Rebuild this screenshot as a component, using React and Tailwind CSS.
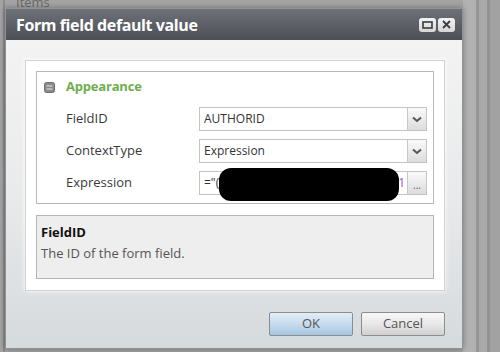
import React from 'react';

const font = "font-['Open_Sans',sans-serif]";

const Chevron = () => (
  <svg width="10" height="7" viewBox="0 0 10 7">
    <path d="M1 1.5 L5 5 L9 1.5" fill="none" stroke="#555" strokeWidth="2" />
  </svg>
);

const DropButton = ({ children }) => (
  <div className="w-[19px] h-full flex items-center justify-center border-l border-[#c8c8c8] bg-gradient-to-b from-[#fafafa] to-[#dcdcdc]">
    {children}
  </div>
);

const Row = ({ label, children }) => (
  <div className="flex items-center h-[32px]">
    <div className="w-[162px] pl-[29px] text-[13px] text-[#3a3a3a]">{label}</div>
    <div className="relative flex h-[24px] w-[228px] border border-[#c4c4c4] bg-white">{children}</div>
  </div>
);

const WinButton = ({ children }) => (
  <div className="w-[17px] h-[14px] rounded-[3px] bg-gradient-to-b from-[#f4f4f4] to-[#d6d6d6] flex items-center justify-center">
    {children}
  </div>
);

export default function App() {
  return (
    <div className={`relative w-[500px] h-[352px] overflow-hidden bg-[#a4a4a4] ${font}`}>
      <div className="absolute left-[16px] top-[-7px] text-[13px] text-[#6a6a6a]">Items</div>
      <div className="absolute left-[463px] top-0 h-full w-[37px] flex">
        <div className="w-[13px] bg-[#b2b2b2]" />
        <div className="w-[3px] bg-[#969696]" />
        <div className="w-[8px] bg-[#a9a9a9]" />
        <div className="w-[3px] bg-[#939393]" />
        <div className="flex-1 bg-[#a2a2a2]" />
      </div>
      <div className="absolute left-[3px] top-0 h-full w-[2px] bg-[#8c8c8c]" />

      <div className="absolute left-[5px] top-[8px] w-[458px] h-[341px] flex flex-col border border-[#8f9296] shadow-[0_0_6px_rgba(0,0,0,0.35)]">
        <div className="h-[31px] shrink-0 flex items-center justify-between pl-[10px] pr-[7px] bg-gradient-to-b from-[#6e7278] to-[#4c5056]">
          <span className="text-[16px] font-bold text-white tracking-[-0.4px]">Form field default value</span>
          <div className="flex gap-[2px]">
            <WinButton>
              <svg width="11" height="8" viewBox="0 0 11 8">
                <rect x="1" y="1" width="9" height="6" fill="none" stroke="#3c3c3c" strokeWidth="1.6" />
              </svg>
            </WinButton>
            <WinButton>
              <svg width="9" height="9" viewBox="0 0 9 9">
                <path d="M1 1 L8 8 M8 1 L1 8" stroke="#3c3c3c" strokeWidth="1.8" />
              </svg>
            </WinButton>
          </div>
        </div>

        <div className="flex-1 flex flex-col pl-[19px] pr-[17px] pt-[20px] bg-gradient-to-b from-[#f3f3f3] via-[#e9eaeb] to-[#d5dadd]">
          <div className="h-[231px] p-[10px] bg-white border border-[#d3d3d3] shadow-[0_0_5px_rgba(255,255,255,1)] flex flex-col gap-[11px]">
            <div className="h-[133px] border border-[#b9b9b9] bg-white pt-[6px]">
              <div className="flex items-center h-[18px]">
                <div className="w-[29px] pl-[7px]">
                  <svg width="11" height="11" viewBox="0 0 11 11">
                    <rect x="0.5" y="0.5" width="10" height="10" rx="2" fill="#8a8a8a" stroke="#6e6e6e" />
                    <path d="M2.5 4 H8.5 M2.5 7 H8.5" stroke="#e6e6e6" strokeWidth="1.2" />
                  </svg>
                </div>
                <span className="text-[13px] font-bold text-[#6fad4f] tracking-[-0.2px]">Appearance</span>
              </div>
              <div className="pt-[7px]">
                <Row label="FieldID">
                  <div className="flex-1 flex items-center pl-[4px] text-[12px] text-[#333]">AUTHORID</div>
                  <DropButton><Chevron /></DropButton>
                </Row>
                <Row label="ContextType">
                  <div className="flex-1 flex items-center pl-[4px] text-[12px] text-[#333]">Expression</div>
                  <DropButton><Chevron /></DropButton>
                </Row>
                <Row label="Expression">
                  <div className="flex-1 flex items-center justify-between pl-[4px] pr-[2px] text-[12px] text-[#333]">
                    <span>="(</span>
                    <span className="text-[#9b59c6]">1</span>
                  </div>
                  <DropButton>
                    <span className="text-[10px] leading-none text-[#555] pt-[4px]">...</span>
                  </DropButton>
                  <div className="absolute left-[19px] top-[-4px] w-[180px] h-[33px] rounded-[12px] bg-black" />
                </Row>
              </div>
            </div>
            <div className="h-[64px] border border-[#b4b4b4] bg-[#eeeeee] px-[4px] pt-[7px]">
              <div className="text-[13px] font-bold text-[#111] leading-[18px]">FieldID</div>
              <div className="text-[13px] text-[#555] leading-[24px]">The ID of the form field.</div>
            </div>
          </div>
          <div className="flex justify-end gap-[8px] mt-[21px]">
            <button className="w-[84px] h-[24px] border border-[#8d8d8d] rounded-[2px] bg-gradient-to-b from-[#e3edf6] via-[#c6dbee] to-[#a7c5e2] text-[13px] text-[#555]">OK</button>
            <button className="w-[84px] h-[24px] border border-[#8d8d8d] rounded-[2px] bg-gradient-to-b from-[#f7f7f7] via-[#e8e8e8] to-[#d0d0d0] text-[13px] text-[#555]">Cancel</button>
          </div>
        </div>
      </div>
    </div>
  );
}
